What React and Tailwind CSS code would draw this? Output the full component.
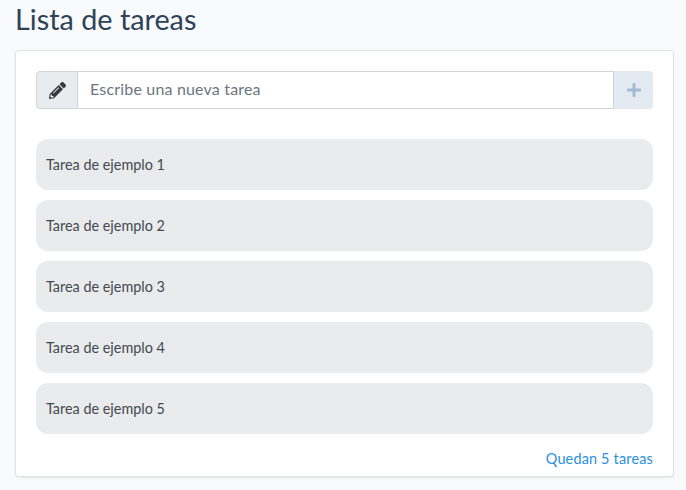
import React from 'react';
import { FaPencilAlt, FaPlus } from 'react-icons/fa';

const tasks = [
  'Tarea de ejemplo 1',
  'Tarea de ejemplo 2',
  'Tarea de ejemplo 3',
  'Tarea de ejemplo 4',
  'Tarea de ejemplo 5'
];

const App = () => {
  return (
    <main className="h-[490px] overflow-hidden bg-[#f8fafc] pl-[15px] pr-[12px] font-['Lato','Noto_Sans',sans-serif] text-[#212529]">
      <h1 className="h-[50px] pt-[2px] text-[28.8px] leading-[34px] text-[#2f4358]">Lista de tareas</h1>

      <section className="h-[427px] rounded-[4px] border border-[#dfe1e3] bg-white px-5 pt-5 shadow-[0_1px_2px_rgba(0,0,0,0.08)]">
        <div className="flex h-[38px]">
          <div className="flex w-[42px] items-center justify-center rounded-l-[4px] border border-[#ced4da] bg-[#e9ecef]">
            <FaPencilAlt className="text-[17px] text-[#343a40]" />
          </div>
          <input
            type="text"
            placeholder="Escribe una nueva tarea"
            className="min-w-0 flex-1 border border-l-0 border-[#ced4da] bg-white px-3 pb-[2px] text-[16px] tracking-[0.18px] outline-none placeholder:text-[#6c757d]"
          />
          <button className="flex w-[39px] items-center justify-center rounded-r-[4px] bg-[#e3eaf2]">
            <FaPlus className="text-[16px] text-[#a3bbd6]" />
          </button>
        </div>

        <ul className="mt-[30px] flex flex-col gap-[10px]">
          {tasks.map((task) => (
            <li
              key={task}
              className="flex h-[51px] items-center rounded-[12px] bg-[#e9ebed] px-[10px] text-[14.4px] text-[#454a50]"
            >
              {task}
            </li>
          ))}
        </ul>

        <p className="mt-[15px] text-right text-[14.4px] leading-[20px] tracking-[0.2px] text-[#2a8fe0]">Quedan 5 tareas</p>
      </section>
    </main>
  );
};

export default App;
